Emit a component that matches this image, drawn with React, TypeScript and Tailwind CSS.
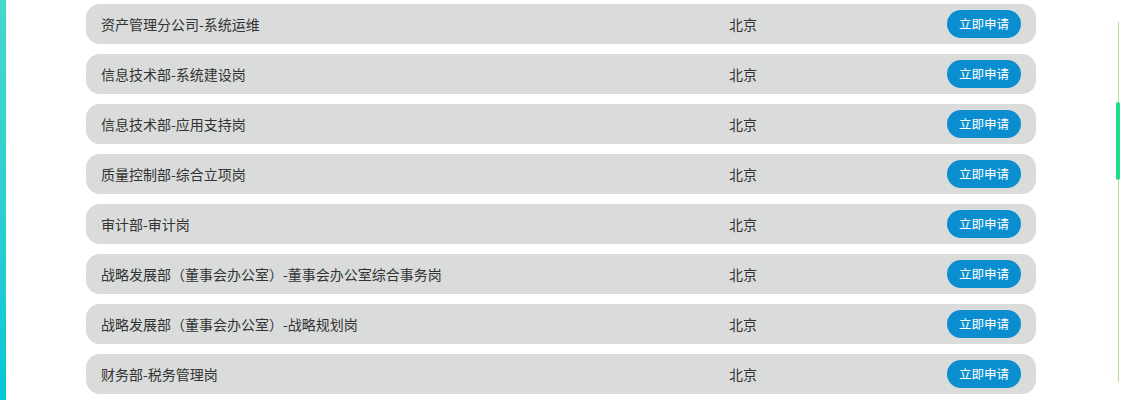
const jobs = [
  "资产管理分公司-系统运维",
  "信息技术部-系统建设岗",
  "信息技术部-应用支持岗",
  "质量控制部-综合立项岗",
  "审计部-审计岗",
  "战略发展部（董事会办公室）-董事会办公室综合事务岗",
  "战略发展部（董事会办公室）-战略规划岗",
  "财务部-税务管理岗",
];

export default function App() {
  return (
    <div
      className="flex h-[400px] w-[1125px] overflow-hidden bg-white text-[#333]"
      style={{ fontFamily: '"Noto Sans CJK SC", "Noto Sans", sans-serif' }}
    >
      {/* left accent */}
      <div className="h-full w-[6px] shrink-0 bg-gradient-to-b from-[#44d8cc] to-[#00c6d6]" />

      {/* list */}
      <div className="ml-[80px] flex w-[950px] shrink-0 flex-col gap-[10px] pt-[4px]">
        {jobs.map((job) => (
          <div
            key={job}
            className="flex h-[40px] items-center rounded-[14px] bg-[#d9dcdb] pl-[15px] pr-[15px] text-[14px]"
          >
            <span className="w-[628px] truncate">{job}</span>
            <span>北京</span>
            <button className="ml-auto h-[28px] w-[74px] rounded-full bg-[#0a8ed0] text-[12.5px] text-white">
              立即申请
            </button>
          </div>
        ))}
      </div>

      {/* scrollbar */}
      <div className="relative ml-[80px] h-full w-[4px] shrink-0">
        <div className="absolute left-[1.5px] top-[22px] h-[360px] w-[1px] bg-[#b5dc9c]" />
        <div className="absolute left-0 top-[102px] h-[78px] w-[4px] rounded-full bg-[#1fdc8a]" />
      </div>
    </div>
  );
}
